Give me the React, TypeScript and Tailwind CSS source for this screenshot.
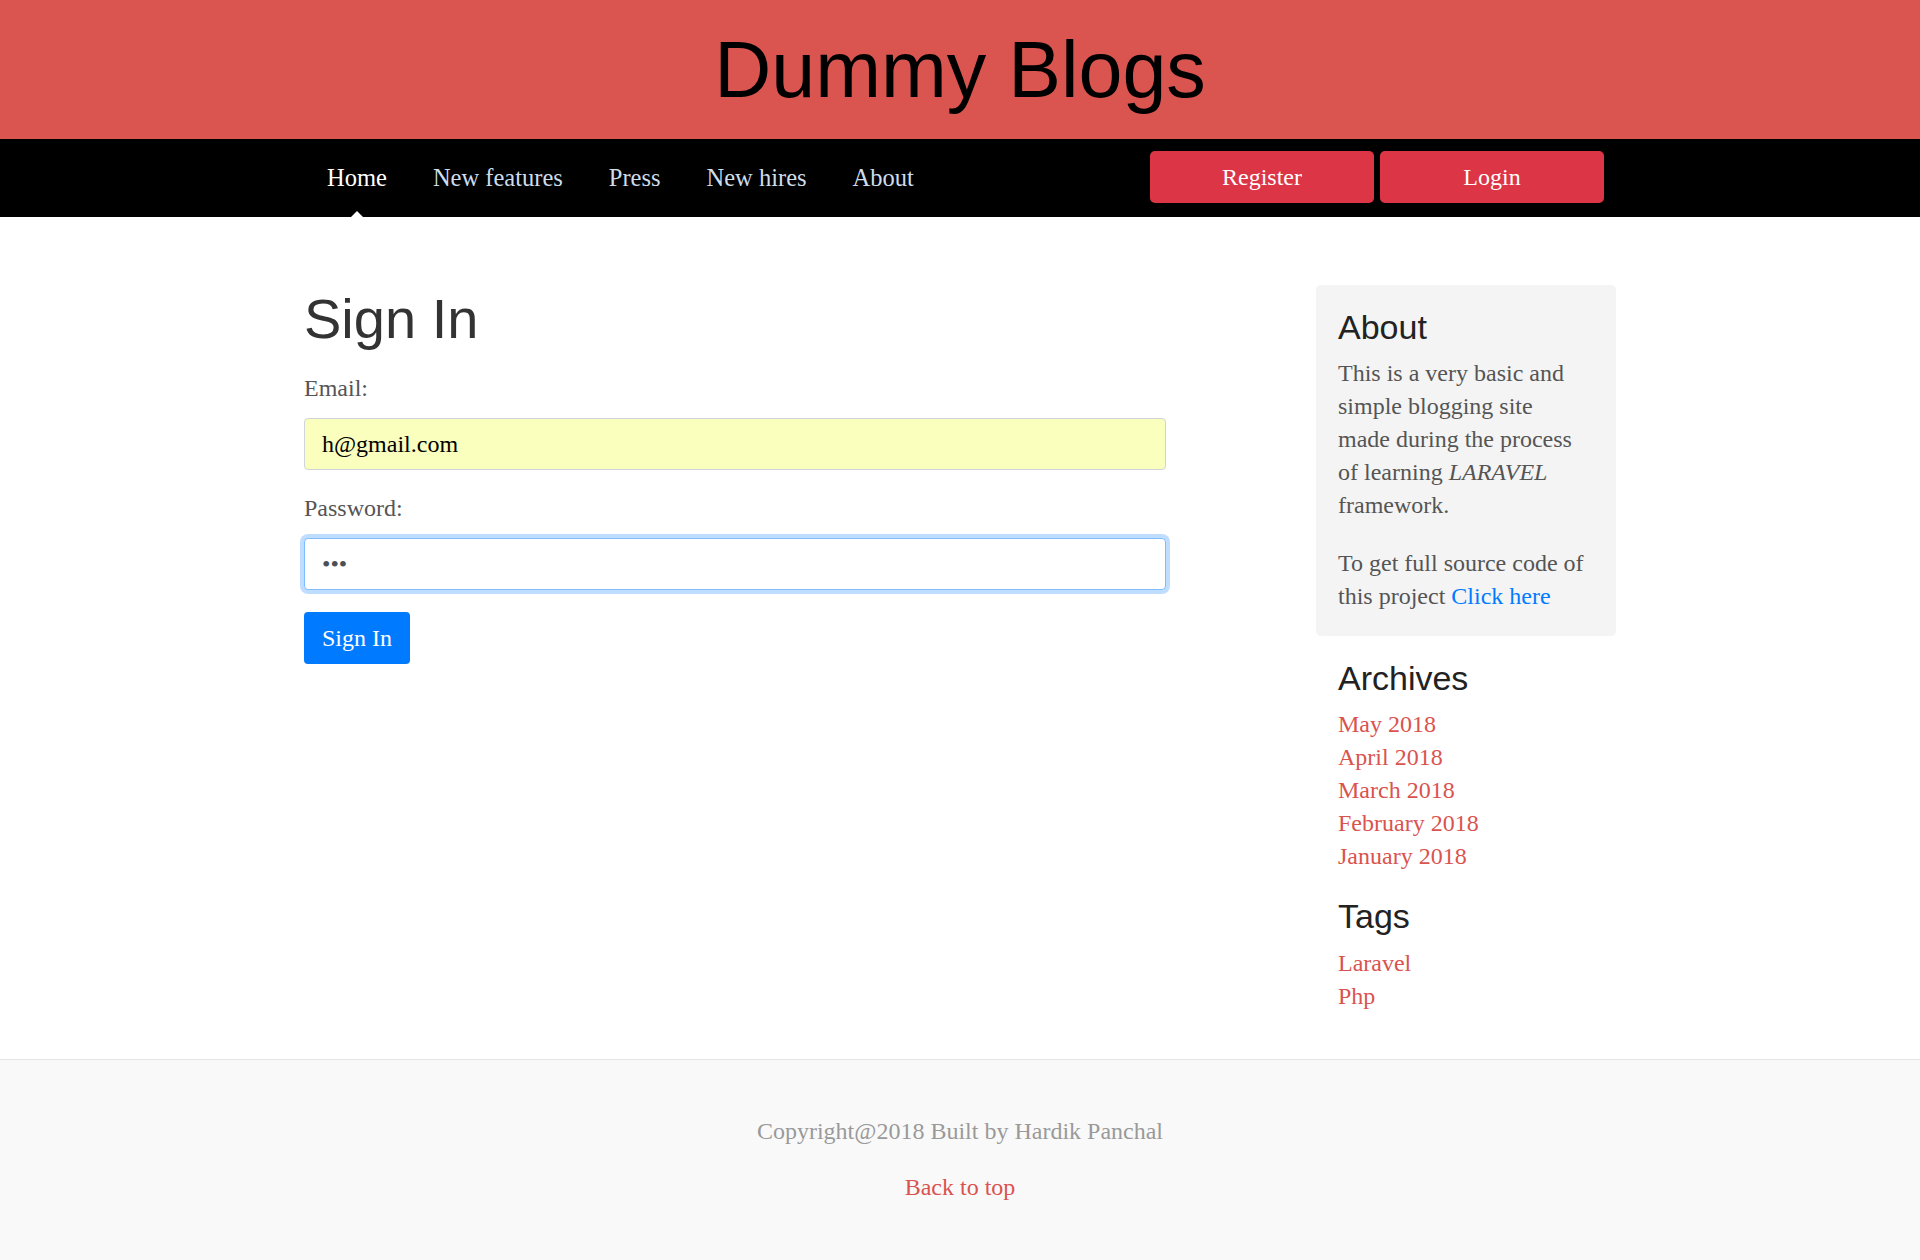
import React from 'react'

const serif = "font-['Liberation_Serif',_Georgia,_serif]"
const sans = "font-['Liberation_Sans',_Arial,_sans-serif]"

const navLinks = ['Home', 'New features', 'Press', 'New hires', 'About']
const archives = ['May 2018', 'April 2018', 'March 2018', 'February 2018', 'January 2018']
const tags = ['Laravel', 'Php']

function Header() {
  return (
    <header className="flex h-[139px] items-center justify-center bg-[#da5550]">
      <h1 className={`${sans} text-[79px] leading-none text-black`}>Dummy Blogs</h1>
    </header>
  )
}

function Nav() {
  return (
    <nav className="h-[78px] bg-black">
      <div className="mx-auto flex h-full w-[1312px] items-center justify-between">
        <ul className={`${serif} flex h-full items-stretch text-[24.5px]`}>
          {navLinks.map((label, i) => (
            <li key={label} className="relative flex items-center px-[23px]">
              <a href="#" className={i === 0 ? 'text-white' : 'text-[#cdddeb]'}>
                {label}
              </a>
              {i === 0 && (
                <span className="absolute bottom-0 left-1/2 -ml-[6px] h-0 w-0 border-x-[6px] border-b-[6px] border-x-transparent border-b-white" />
              )}
            </li>
          ))}
        </ul>
        <div className="mr-[12px] mb-[3px] flex gap-[6px]">
          {['Register', 'Login'].map((label) => (
            <button
              key={label}
              className={`${serif} h-[52px] w-[224px] rounded-[5px] bg-[#dc3545] text-[24px] text-white`}
            >
              {label}
            </button>
          ))}
        </div>
      </div>
    </nav>
  )
}

function SignInForm() {
  return (
    <div className="w-[862px]">
      <h2 className={`${sans} mb-[20px] text-[56px] leading-[67px] text-[#333]`}>Sign In</h2>
      <label className={`${serif} mb-[13px] block text-[24px] leading-[33px] text-[#555]`}>Email:</label>
      <input
        type="email"
        defaultValue="h@gmail.com"
        className={`${serif} mb-[22px] block h-[52px] w-full rounded-[4px] border border-[#ced4da] bg-[#faffbd] px-[17px] text-[24px] text-black outline-none`}
      />
      <label className={`${serif} mb-[13px] block text-[24px] leading-[33px] text-[#555]`}>Password:</label>
      <input
        type="password"
        defaultValue="abc"
        className={`${serif} mb-[22px] block h-[52px] w-full rounded-[4px] border border-[#80bdff] bg-white px-[17px] text-[24px] text-[#495057] shadow-[0_0_0_4px_rgba(0,123,255,0.25)] outline-none`}
      />
      <button className={`${serif} h-[52px] w-[106px] rounded-[4px] bg-[#007bff] text-[24px] text-white`}>
        Sign In
      </button>
    </div>
  )
}

function Sidebar() {
  const heading = `${sans} text-[34px] leading-[41px] text-[#222]`
  const link = `${serif} block text-[24px] leading-[33px] text-[#d9534f]`
  return (
    <aside className="w-[300px]">
      <div className="rounded-[5px] bg-[#f4f4f4] px-[22px] pt-[22px] pb-[23px]">
        <h4 className={`${heading} mb-[9px]`}>About</h4>
        <p className={`${serif} mb-[25px] text-[24px] leading-[33px] text-[#555]`}>
          This is a very basic and
          <br />
          simple blogging site
          <br />
          made during the process
          <br />
          of learning <em>LARAVEL</em>
          <br />
          framework.
        </p>
        <p className={`${serif} text-[24px] leading-[33px] text-[#555]`}>
          To get full source code of
          <br />
          this project{' '}
          <a href="#" className="text-[#007bff]">
            Click here
          </a>
        </p>
      </div>

      <h4 className={`${heading} mt-[22px] mb-[9px] pl-[22px]`}>Archives</h4>
      <div className="pl-[22px]">
        {archives.map((a) => (
          <a key={a} href="#" className={link}>
            {a}
          </a>
        ))}
      </div>

      <h4 className={`${heading} mt-[23px] mb-[10px] pl-[22px]`}>Tags</h4>
      <div className="pl-[22px]">
        {tags.map((t) => (
          <a key={t} href="#" className={link}>
            {t}
          </a>
        ))}
      </div>
    </aside>
  )
}

function Footer() {
  return (
    <footer className={`${serif} border-t border-[#e5e5e5] bg-[#f9f9f9] pt-[55px] pb-[56px] text-center text-[24px] leading-[33px]`}>
      <p className="text-[#999]">Copyright@2018 Built by Hardik Panchal</p>
      <p className="mt-[23px]">
        <a href="#" className="text-[#d9534f]">
          Back to top
        </a>
      </p>
    </footer>
  )
}

export default function App() {
  return (
    <div className="min-h-screen bg-white">
      <Header />
      <Nav />
      <main className="mx-auto flex w-[1312px] justify-between pt-[68px] pb-[46px]">
        <SignInForm />
        <Sidebar />
      </main>
      <Footer />
    </div>
  )
}
